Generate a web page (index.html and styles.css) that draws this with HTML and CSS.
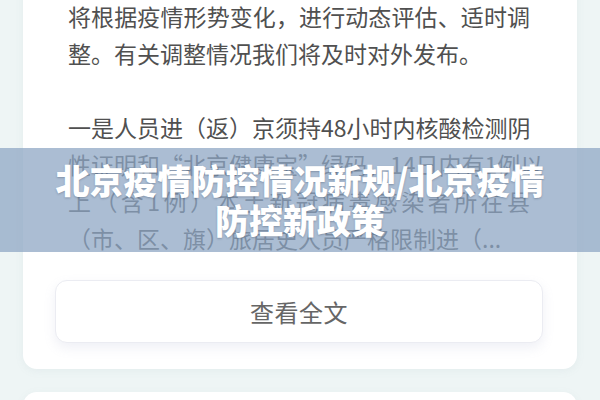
FILE: index.html
```html
<!DOCTYPE html>
<html lang="zh-CN">
<head>
<meta charset="utf-8">
<title>北京疫情防控情况新规</title>
<link rel="stylesheet" href="styles.css">
</head>
<body>
<div class="feed">
  <section class="card">
    <div class="article">
      <div class="line full">将根据疫情形势变化，进行动态评估、适时调</div>
      <div class="line">整。有关调整情况我们将及时对外发布。</div>
      <div class="line blank"></div>
      <div class="line full">一是人员进（返）京须持48小时内核酸检测阴</div>
      <div class="line full">性证明和“北京健康宝”绿码，14日内有1例以</div>
      <div class="line full">上（含1例）本土新冠病毒感染者所在县</div>
      <div class="line">（市、区、旗）旅居史人员严格限制进（...</div>
    </div>
    <button class="read-more" type="button">查看全文</button>
  </section>
  <section class="card next"></section>
</div>
<div class="headline">
  <h1>北京疫情防控情况新规/北京疫情<br>防控新政策</h1>
</div>
</body>
</html>
```

FILE: styles.css
```css
html, body {
  margin: 0;
  padding: 0;
}

body {
  width: 600px;
  height: 400px;
  overflow: hidden;
  position: relative;
  background: #eef5f5;
  font-family: "Noto Sans CJK SC", "Noto Sans", sans-serif;
}

.feed {
  display: flex;
  flex-direction: column;
  gap: 23px;
  padding: 0 23px;
  margin-top: -30px;
}

.card {
  background: #ffffff;
  border-radius: 14px;
  box-shadow: 0 2px 8px rgba(120, 140, 150, 0.08);
  padding: 28px 34px 26px 32px;
}

.card.next {
  height: 60px;
  padding: 0;
}

.article {
  padding: 0 13px;
  color: #505050;
  font-size: 23px;
  line-height: 37px;
}

.line {
  height: 37px;
  white-space: nowrap;
}

.line.full {
  text-align: justify;
  text-align-last: justify;
}

.read-more {
  display: block;
  width: 100%;
  height: 63px;
  margin-top: 23px;
  border: 1px solid #ebecf2;
  border-radius: 12px;
  background: #ffffff;
  box-shadow: 0 5px 12px rgba(140, 150, 190, 0.14);
  color: #666666;
  font-family: inherit;
  font-size: 24px;
  letter-spacing: 0.5px;
}

/* translucent title band laid over the article */
.headline {
  position: absolute;
  left: 0;
  right: 0;
  top: 148px;
  height: 104px;
  background: rgba(141, 166, 196, 0.74);
  display: flex;
  align-items: center;
  justify-content: center;
}

.headline h1 {
  margin: 0;
  color: #ffffff;
  font-size: 34px;
  font-weight: 900;
  line-height: 40px;
  text-align: center;
  text-shadow: 0 1px 2px rgba(40, 50, 70, 0.3);
}
```
